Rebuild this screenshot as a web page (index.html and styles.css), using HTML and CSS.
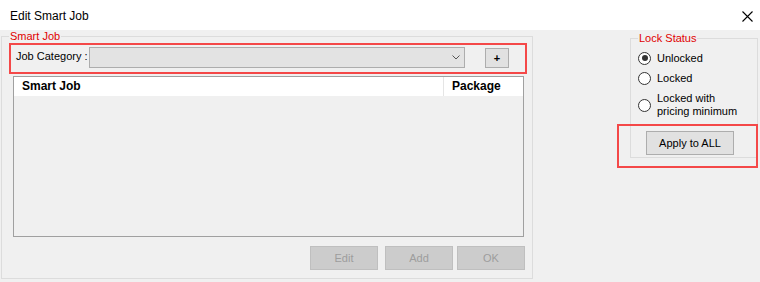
FILE: index.html
```html
<!DOCTYPE html>
<html>
<head>
<meta charset="utf-8">
<title>Edit Smart Job</title>
<link rel="stylesheet" href="styles.css">
</head>
<body>
<div class="window">
  <div class="titlebar">
    <span class="title">Edit Smart Job</span>
    <svg class="close" width="11" height="11" viewBox="0 0 11 11"><path d="M0.5 0.5 L10.5 10.5 M10.5 0.5 L0.5 10.5" stroke="#000" stroke-width="1.1" fill="none"/></svg>
  </div>
  <div class="main">
    <div class="group group-left">
      <span class="group-label">Smart Job</span>
      <div class="cat-row">
        <span class="cat-label">Job Category :</span>
        <div class="combo">
          <svg width="8" height="5" viewBox="0 0 8 5"><polyline points="0.5,0.5 4,4 7.5,0.5" stroke="#555" stroke-width="1" fill="none"/></svg>
        </div>
        <div class="btn plus">+</div>
      </div>
      <div class="list">
        <div class="list-head">
          <div class="col col-job">Smart Job</div>
          <div class="col col-pkg">Package</div>
        </div>
        <div class="list-body"></div>
      </div>
      <div class="actions">
        <div class="btn disabled btn-edit">Edit</div>
        <div class="btn disabled btn-add">Add</div>
        <div class="btn disabled btn-ok">OK</div>
      </div>
    </div>
    <div class="group group-right">
      <span class="group-label">Lock Status</span>
      <div class="radio-row r1"><span class="radio checked"></span><span class="rtext">Unlocked</span></div>
      <div class="radio-row r2"><span class="radio"></span><span class="rtext">Locked</span></div>
      <div class="radio-row r3"><span class="radio"></span><span class="rtext">Locked with<br>pricing minimum</span></div>
      <div class="btn apply">Apply to ALL</div>
      <div class="highlight"></div>
    </div>
  </div>
</div>
</body>
</html>
```

FILE: styles.css
```css
* { box-sizing: border-box; }
html, body {
  margin: 0;
  padding: 0;
  background: #f0f0f0;
}
body {
  width: 760px;
  height: 282px;
  overflow: hidden;
  font-family: "Liberation Sans", Arial, sans-serif;
  font-size: 11px;
  color: #000;
}
.titlebar {
  height: 30px;
  background: #fff;
  display: flex;
  align-items: center;
  justify-content: space-between;
  padding: 0 7px 0 10px;
}
.title {
  font-size: 12px;
  margin-top: 2px;
}
.close { margin-top: 3px; }
.main {
  display: flex;
  align-items: flex-start;
  padding-left: 1px;
}
.group {
  position: relative;
  border: 1px solid #dcdcdc;
}
.group-label {
  position: absolute;
  top: -7px;
  left: 7px;
  padding: 0 1px;
  background: #f0f0f0;
  color: #e00000;
  line-height: 12px;
}
.group-left {
  width: 532px;
  height: 243px;
  margin-top: 6px;
  padding: 6px 7px 0 7px;
  display: flex;
  flex-direction: column;
}
.cat-row {
  width: 518px;
  height: 31px;
  border: 2px solid #f44848;
  display: flex;
  align-items: flex-start;
  padding-left: 5px;
}
.cat-label {
  width: 73px;
  flex: none;
  line-height: 13px;
  margin-top: 5px;
}
.combo {
  width: 376px;
  height: 21px;
  margin-top: 2px;
  border: 1px solid #adadad;
  background: #e3e3e3;
  display: flex;
  align-items: center;
  justify-content: flex-end;
  padding-right: 4px;
}
.btn {
  display: flex;
  align-items: center;
  justify-content: center;
  border: 1px solid #adadad;
  background: #e1e1e1;
}
.plus {
  width: 24px;
  height: 20px;
  margin-left: 20px;
  margin-top: 3px;
  font-weight: bold;
  font-size: 11px;
}
.list {
  width: 511px;
  height: 161px;
  margin-top: 2px;
  margin-left: 4px;
  border: 1px solid #a0a0a0;
  background: #f0f0f0;
}
.list-head {
  height: 19px;
  background: #fff;
  display: flex;
}
.col {
  font-weight: bold;
  font-size: 12px;
  line-height: 19px;
  padding-left: 8px;
}
.col-job {
  width: 430px;
  border-right: 1px solid #e5e5e5;
}
.col-pkg { flex: 1; }
.actions {
  display: flex;
  justify-content: flex-end;
  margin-top: 9px;
  width: 516px;
}
.disabled {
  width: 68px;
  height: 24px;
  background: #cccccc;
  border-color: #bfbfbf;
  color: #9d9d9d;
}
.btn-add { margin-left: 7px; }
.btn-ok { margin-left: 4px; }
.group-right {
  width: 128px;
  height: 120px;
  margin-left: 97px;
  margin-top: 8px;
  padding: 9px 0 0 7px;
}
.radio-row {
  display: flex;
  align-items: center;
  height: 20px;
}
.r3 {
  height: 26px;
  margin-top: 4px;
}
.radio {
  width: 13px;
  height: 13px;
  flex: none;
  border: 1px solid #333;
  border-radius: 50%;
  background: #fff;
  display: flex;
  align-items: center;
  justify-content: center;
}
.radio.checked::after {
  content: "";
  width: 6px;
  height: 6px;
  border-radius: 50%;
  background: #333;
}
.rtext {
  margin-left: 6px;
  line-height: 13px;
}
.apply {
  width: 88px;
  height: 24px;
  margin-top: 13px;
  margin-left: 8px;
}
.highlight {
  position: absolute;
  left: -14px;
  top: 85px;
  width: 141px;
  height: 44px;
  border: 2px solid #f44848;
  pointer-events: none;
}
```
